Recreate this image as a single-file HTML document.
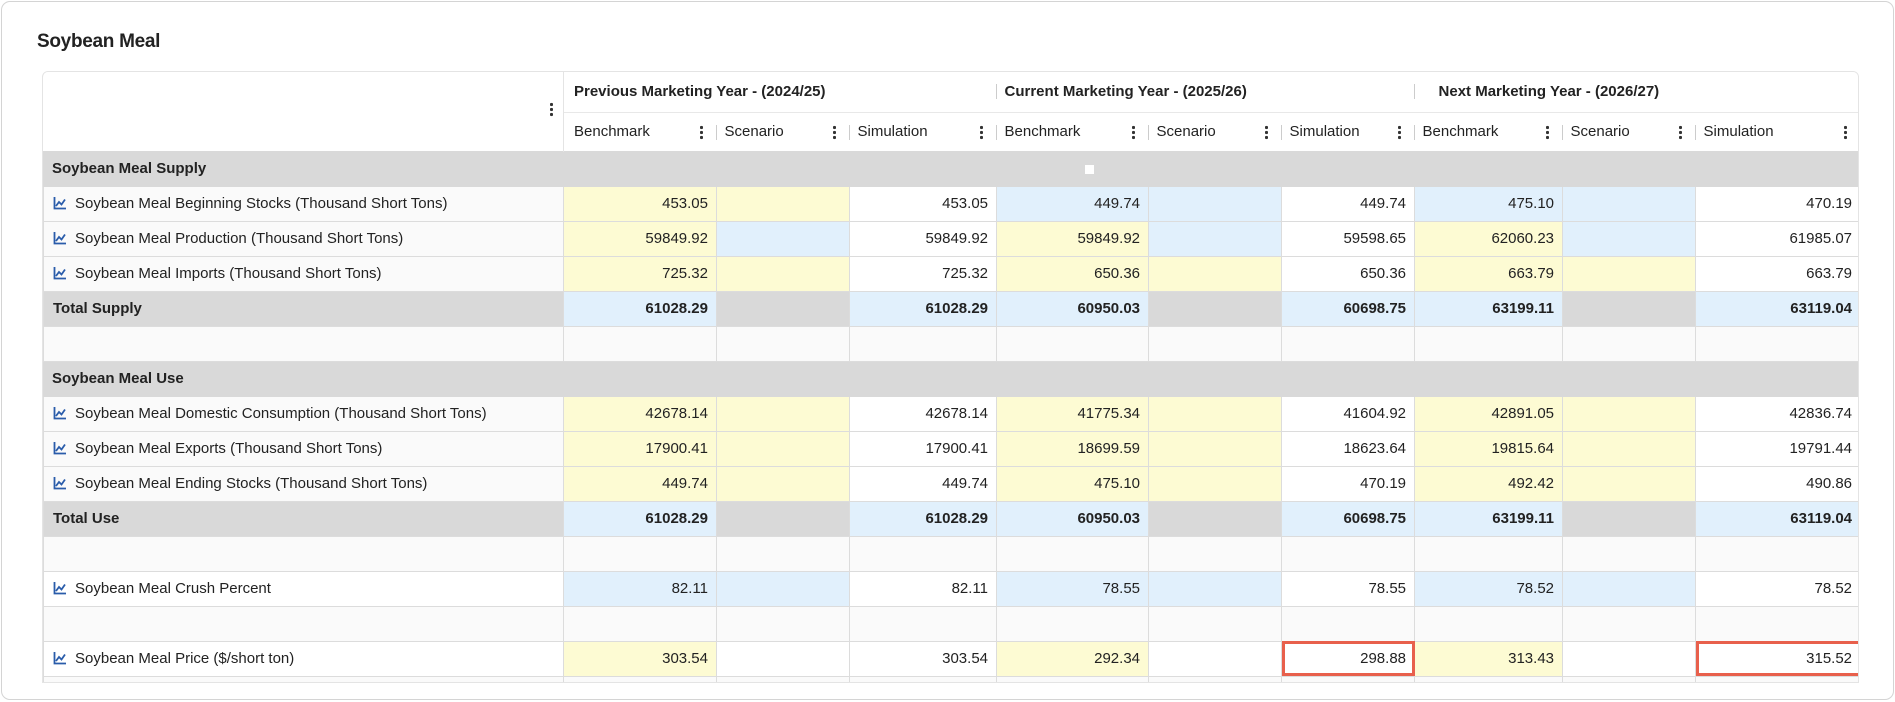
<!DOCTYPE html>
<html><head><meta charset="utf-8"><style>
*{box-sizing:border-box;margin:0;padding:0}
body{width:1895px;height:702px;background:#fff;font-family:"Liberation Sans",sans-serif;color:#222;overflow:hidden}
.card{position:absolute;left:1px;top:1px;width:1893px;height:699px;border:1px solid #d4d4d4;border-radius:9px}
h1{position:absolute;left:37px;top:31px;font-size:19px;font-weight:bold;letter-spacing:-0.3px}
.wrap{position:absolute;left:42px;top:71px;width:1817px;height:612px;border:1px solid #e4e4e4;border-radius:6px 6px 0 0;overflow:hidden}
table{border-collapse:collapse;table-layout:fixed;width:1817px;font-size:15px}
td{height:35px;border:1px solid #dcdcdc;padding:0 8px;text-align:right;white-space:nowrap;overflow:hidden;background:#fff}
td.l{text-align:left;background:#fafafa;padding-left:9px}
tr.alt td{background:#fafafa}
.y{background:#fdfbd3!important}
.b{background:#e1f0fc!important}
.g{background:#d9d9d9!important}
tr.sec td{background:#d9d9d9;border-color:#d9d9d9;font-weight:bold;text-align:left}
tr.tot td{font-weight:bold}
tr.tot td.l,tr.tot td.gg{background:#d9d9d9}
.hd td{background:#fff;border:none;text-align:left;font-size:15px}
.grp td{height:40px;font-weight:bold;border-bottom:1px solid #e8e8e8;position:relative}
.sub td{height:39px;position:relative}
.k{position:absolute;right:14px;top:12px;width:3px;height:15px;background:radial-gradient(circle,#333 1.5px,transparent 1.8px) 0 0/3px 5px repeat-y}
.sep{position:absolute;right:0;top:12px;width:1px;height:15px;background:#ccc}
.red{outline:3px solid #e8604c;outline-offset:-3px}
svg{vertical-align:-2px;margin-right:8px}
</style></head><body>
<div class="card"></div>
<h1>Soybean Meal</h1>
<div class="wrap">
<table>
<colgroup><col style="width:520px"><col style="width:153px"><col style="width:133px"><col style="width:147px"><col style="width:152px"><col style="width:133px"><col style="width:133px"><col style="width:148px"><col style="width:133px"><col style="width:165px"></colgroup>
<tr class="hd grp"><td rowspan="2" style="border-right:1px solid #e4e4e4;position:relative;border-bottom:none"><span class="k" style="right:10px;top:30px"></span></td><td colspan="3" style="padding-left:10px">Previous Marketing Year - (2024/25)<span class="sep"></span></td><td colspan="3" style="padding-left:8px">Current Marketing Year - (2025/26)<span class="sep"></span></td><td colspan="3" style="padding-left:24px">Next Marketing Year - (2026/27)<span class="sep"></span></td></tr>
<tr class="hd sub"><td style="padding-left:10px">Benchmark<span class="k"></span><span class="sep"></span></td><td>Scenario<span class="k"></span><span class="sep"></span></td><td>Simulation<span class="k"></span><span class="sep"></span></td><td>Benchmark<span class="k"></span><span class="sep"></span></td><td>Scenario<span class="k"></span><span class="sep"></span></td><td>Simulation<span class="k"></span><span class="sep"></span></td><td>Benchmark<span class="k"></span><span class="sep"></span></td><td>Scenario<span class="k"></span><span class="sep"></span></td><td>Simulation<span class="k"></span><span class="sep"></span></td></tr>
<tr class="sec"><td>Soybean Meal Supply</td><td></td><td></td><td></td><td style="position:relative"><span style="position:absolute;left:88px;top:13px;width:9px;height:9px;background:#fff"></span></td><td></td><td></td><td></td><td></td><td></td></tr>
<tr><td class="l"><svg width="14" height="14" viewBox="0 0 14 14"><path d="M1.5 1v11.5H13" stroke="#2a5caa" stroke-width="1.8" fill="none"/><path d="M3 10l3-4 2.5 2.5L12 3.5" stroke="#2a5caa" stroke-width="1.8" fill="none"/></svg>Soybean Meal Beginning Stocks (Thousand Short Tons)</td><td class="y">453.05</td><td class="y"></td><td>453.05</td><td class="b">449.74</td><td class="b"></td><td>449.74</td><td class="b">475.10</td><td class="b"></td><td>470.19</td></tr>
<tr><td class="l"><svg width="14" height="14" viewBox="0 0 14 14"><path d="M1.5 1v11.5H13" stroke="#2a5caa" stroke-width="1.8" fill="none"/><path d="M3 10l3-4 2.5 2.5L12 3.5" stroke="#2a5caa" stroke-width="1.8" fill="none"/></svg>Soybean Meal Production (Thousand Short Tons)</td><td class="y">59849.92</td><td class="b"></td><td>59849.92</td><td class="y">59849.92</td><td class="b"></td><td>59598.65</td><td class="y">62060.23</td><td class="b"></td><td>61985.07</td></tr>
<tr><td class="l"><svg width="14" height="14" viewBox="0 0 14 14"><path d="M1.5 1v11.5H13" stroke="#2a5caa" stroke-width="1.8" fill="none"/><path d="M3 10l3-4 2.5 2.5L12 3.5" stroke="#2a5caa" stroke-width="1.8" fill="none"/></svg>Soybean Meal Imports (Thousand Short Tons)</td><td class="y">725.32</td><td class="y"></td><td>725.32</td><td class="y">650.36</td><td class="y"></td><td>650.36</td><td class="y">663.79</td><td class="y"></td><td>663.79</td></tr>
<tr class="tot"><td class="l">Total Supply</td><td class="b">61028.29</td><td class="gg"></td><td class="b">61028.29</td><td class="b">60950.03</td><td class="gg"></td><td class="b">60698.75</td><td class="b">63199.11</td><td class="gg"></td><td class="b">63119.04</td></tr>
<tr class="alt"><td></td><td></td><td></td><td></td><td></td><td></td><td></td><td></td><td></td><td></td></tr>
<tr class="sec"><td>Soybean Meal Use</td><td></td><td></td><td></td><td></td><td></td><td></td><td></td><td></td><td></td></tr>
<tr><td class="l"><svg width="14" height="14" viewBox="0 0 14 14"><path d="M1.5 1v11.5H13" stroke="#2a5caa" stroke-width="1.8" fill="none"/><path d="M3 10l3-4 2.5 2.5L12 3.5" stroke="#2a5caa" stroke-width="1.8" fill="none"/></svg>Soybean Meal Domestic Consumption (Thousand Short Tons)</td><td class="y">42678.14</td><td class="y"></td><td>42678.14</td><td class="y">41775.34</td><td class="y"></td><td>41604.92</td><td class="y">42891.05</td><td class="y"></td><td>42836.74</td></tr>
<tr><td class="l"><svg width="14" height="14" viewBox="0 0 14 14"><path d="M1.5 1v11.5H13" stroke="#2a5caa" stroke-width="1.8" fill="none"/><path d="M3 10l3-4 2.5 2.5L12 3.5" stroke="#2a5caa" stroke-width="1.8" fill="none"/></svg>Soybean Meal Exports (Thousand Short Tons)</td><td class="y">17900.41</td><td class="y"></td><td>17900.41</td><td class="y">18699.59</td><td class="y"></td><td>18623.64</td><td class="y">19815.64</td><td class="y"></td><td>19791.44</td></tr>
<tr><td class="l"><svg width="14" height="14" viewBox="0 0 14 14"><path d="M1.5 1v11.5H13" stroke="#2a5caa" stroke-width="1.8" fill="none"/><path d="M3 10l3-4 2.5 2.5L12 3.5" stroke="#2a5caa" stroke-width="1.8" fill="none"/></svg>Soybean Meal Ending Stocks (Thousand Short Tons)</td><td class="y">449.74</td><td class="y"></td><td>449.74</td><td class="y">475.10</td><td class="y"></td><td>470.19</td><td class="y">492.42</td><td class="y"></td><td>490.86</td></tr>
<tr class="tot"><td class="l">Total Use</td><td class="b">61028.29</td><td class="gg"></td><td class="b">61028.29</td><td class="b">60950.03</td><td class="gg"></td><td class="b">60698.75</td><td class="b">63199.11</td><td class="gg"></td><td class="b">63119.04</td></tr>
<tr class="alt"><td></td><td></td><td></td><td></td><td></td><td></td><td></td><td></td><td></td><td></td></tr>
<tr><td class="l" style="background:#fff"><svg width="14" height="14" viewBox="0 0 14 14"><path d="M1.5 1v11.5H13" stroke="#2a5caa" stroke-width="1.8" fill="none"/><path d="M3 10l3-4 2.5 2.5L12 3.5" stroke="#2a5caa" stroke-width="1.8" fill="none"/></svg>Soybean Meal Crush Percent</td><td class="b">82.11</td><td class="b"></td><td>82.11</td><td class="b">78.55</td><td class="b"></td><td>78.55</td><td class="b">78.52</td><td class="b"></td><td>78.52</td></tr>
<tr class="alt"><td></td><td></td><td></td><td></td><td></td><td></td><td></td><td></td><td></td><td></td></tr>
<tr><td class="l" style="background:#fff"><svg width="14" height="14" viewBox="0 0 14 14"><path d="M1.5 1v11.5H13" stroke="#2a5caa" stroke-width="1.8" fill="none"/><path d="M3 10l3-4 2.5 2.5L12 3.5" stroke="#2a5caa" stroke-width="1.8" fill="none"/></svg>Soybean Meal Price ($/short ton)</td><td class="y">303.54</td><td></td><td>303.54</td><td class="y">292.34</td><td></td><td class="red">298.88</td><td class="y">313.43</td><td></td><td class="red">315.52</td></tr>
<tr class="alt"><td></td><td></td><td></td><td></td><td></td><td></td><td></td><td></td><td></td><td></td></tr>
</table>
</div>
</body></html>
